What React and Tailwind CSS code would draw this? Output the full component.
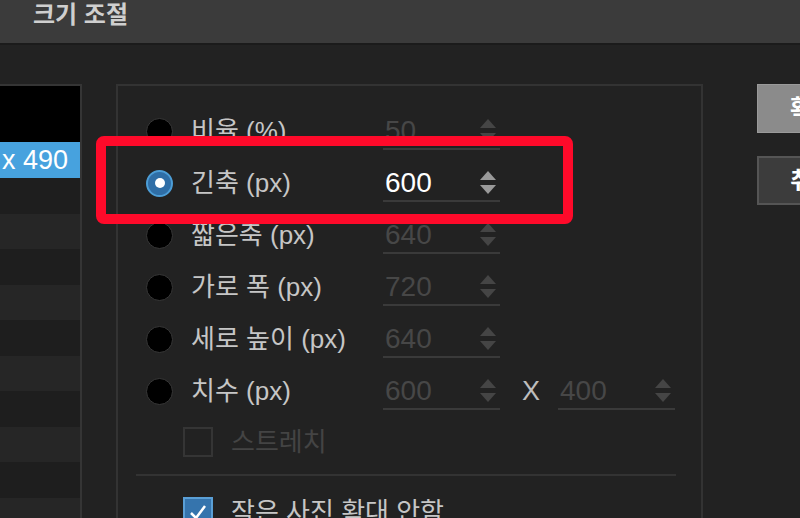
import React from "react";

const FONT = { fontFamily: '"Liberation Sans", "Noto Sans CJK KR", sans-serif' };

function Stepper({ active }) {
  const c = active ? "#9a9a9a" : "#454545";
  return (
    <svg width="18" height="26" viewBox="0 0 18 26" className="shrink-0">
      <polygon points="9,1 17,10 1,10" fill={c} />
      <polygon points="1,15 17,15 9,24" fill={c} />
    </svg>
  );
}

function Field({ value, active, width = "w-[117px]" }) {
  return (
    <div className={`${width} h-[36px] flex items-center justify-between border-b-2 border-[#3a3a3a] pl-[2px] pr-[3px] mt-[1px]`}>
      <span className={active ? "text-[28px] text-white" : "text-[28px] text-[#474747]"}>{value}</span>
      <Stepper active={active} />
    </div>
  );
}

function Radio({ selected }) {
  if (selected) {
    return (
      <div className="w-[27px] h-[27px] rounded-full bg-[#2f6ea6] border-2 border-[#4c9dd6] flex items-center justify-center shrink-0">
        <div className="w-[10px] h-[10px] rounded-full bg-white" />
      </div>
    );
  }
  return <div className="w-[27px] h-[27px] rounded-full bg-black border border-[#383838] shrink-0" />;
}

function Row({ label, value, selected, extra }) {
  return (
    <div className="h-[52px] flex items-center">
      <Radio selected={selected} />
      <span className="ml-[18px] w-[192px] text-[26px] text-[#c6c6c6] leading-none">{label}</span>
      <Field value={value} active={selected} />
      {extra}
    </div>
  );
}

export default function App() {
  const rows = Array.from({ length: 10 });
  return (
    <div className="w-[800px] h-[518px] overflow-hidden bg-[#222222] relative" style={FONT}>
      <div className="h-[45px] bg-[#3b3b3b] border-b-2 border-[#1b1b1b] flex items-center pl-[33px]">
        <span className="text-[24px] font-bold text-[#cfcfcf] leading-none -mt-[14px]">크기 조절</span>
      </div>
      <div className="flex">
        <div className="w-[82px] mt-[39px] border-t-2 border-r-2 border-[#353535] shrink-0">
          <div className="h-[56px] bg-black" />
          <div className="h-[36px] bg-[#47a2de] flex items-center pl-[2px]">
            <span className="text-[27px] text-white leading-none">x 490</span>
          </div>
          {rows.map((_, i) => (
            <div key={i} className={i % 2 === 0 ? "h-[35.5px] bg-[#1e1e1e]" : "h-[35.5px] bg-[#262626]"} />
          ))}
        </div>
        <div className="ml-[34px] mt-[39px] w-[587px] h-[500px] border-2 border-[#333333] shrink-0 pl-[28px] pt-[19px]">
          <Row label="비율 (%)" value="50" />
          <Row label="긴축 (px)" value="600" selected />
          <Row label="짧은축 (px)" value="640" />
          <Row label="가로 폭 (px)" value="720" />
          <Row label="세로 높이 (px)" value="640" />
          <Row
            label="치수 (px)"
            value="600"
            extra={
              <>
                <span className="ml-[22px] w-[36px] text-[27px] text-[#bdbdbd] leading-none">X</span>
                <Field value="400" />
              </>
            }
          />
          <div className="h-[50px] flex items-center pl-[37px]">
            <div className="w-[30px] h-[30px] border-2 border-[#353535]" />
            <span className="ml-[18px] text-[26px] text-[#444444] leading-none">스트레치</span>
          </div>
          <div className="ml-[-10px] mt-[7px] w-[540px] h-[2px] bg-[#333333]" />
          <div className="mt-[21px] flex items-center pl-[37px]">
            <div className="w-[30px] h-[30px] bg-[#3574ad] border-2 border-[#5a9fd6] flex items-center justify-center">
              <svg width="22" height="22" viewBox="0 0 22 22">
                <path d="M4 12 L9 17 L18 5" stroke="white" strokeWidth="2.5" fill="none" />
              </svg>
            </div>
            <span className="ml-[18px] text-[26px] text-[#c6c6c6] leading-none">작은 사진 확대 안함</span>
          </div>
        </div>
        <div className="ml-[54px] mt-[39px] flex flex-col gap-[23px] shrink-0">
          <div className="w-[110px] h-[49px] bg-[#8b8b8b] border border-[#9a9a9a] flex items-center justify-center text-[24px] text-white font-bold">확인</div>
          <div className="w-[110px] h-[49px] bg-[#3c3c3c] border-2 border-[#555555] flex items-center justify-center text-[24px] text-white font-bold">취소</div>
        </div>
      </div>
      <div className="absolute left-[96px] top-[136px] w-[477px] h-[88px] border-[10px] border-[#ff0a2a] rounded-[8px]" />
    </div>
  );
}
